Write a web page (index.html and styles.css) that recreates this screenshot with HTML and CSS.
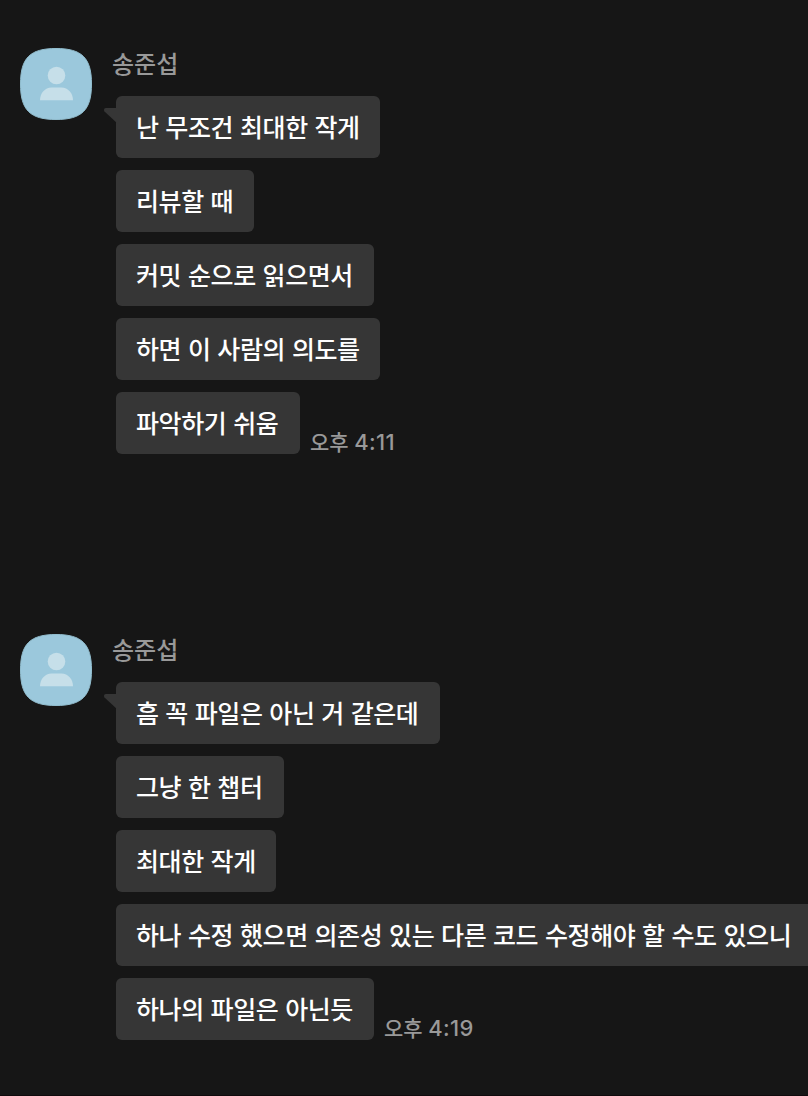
FILE: index.html
```html
<!DOCTYPE html>
<html lang="ko">
<head>
<meta charset="utf-8">
<title>채팅</title>
<link rel="stylesheet" href="styles.css">
</head>
<body>
<main class="chat">
  <section class="group">
    <svg class="avatar" viewBox="0 0 72 72"><path class="avatar-bg" d="M36 .5C62 .5 71.500 10 71.500 36S62 71.500 36 71.500S.5 62 .5 36S10 .5 36 .5Z"/><circle class="avatar-fg" cx="36.500" cy="27.500" r="8.800"/><path class="avatar-fg" d="M20 52.300C20 45 25 39.500 31.500 39.500H41.500C48 39.500 53 45 53 52.300Z"/></svg>
    <div class="content">
      <div class="name">송준섭</div>
      <div class="row"><svg class="tail" viewBox="0 0 14 16"><path d="M14 0H2C0 0-.5 2 .5 3.500L14 16Z"/></svg><div class="bubble w264">난 무조건 최대한 작게</div></div>
      <div class="row"><div class="bubble w138">리뷰할 때</div></div>
      <div class="row"><div class="bubble w258">커밋 순으로 읽으면서</div></div>
      <div class="row"><div class="bubble w264">하면 이 사람의 의도를</div></div>
      <div class="row"><div class="bubble w184">파악하기 쉬움</div><time class="time">오후 <span class="clock">4:11</span></time></div>
    </div>
  </section>
  <section class="group">
    <svg class="avatar" viewBox="0 0 72 72"><path class="avatar-bg" d="M36 .5C62 .5 71.500 10 71.500 36S62 71.500 36 71.500S.5 62 .5 36S10 .5 36 .5Z"/><circle class="avatar-fg" cx="36.500" cy="27.500" r="8.800"/><path class="avatar-fg" d="M20 52.300C20 45 25 39.500 31.500 39.500H41.500C48 39.500 53 45 53 52.300Z"/></svg>
    <div class="content">
      <div class="name">송준섭</div>
      <div class="row"><svg class="tail" viewBox="0 0 14 16"><path d="M14 0H2C0 0-.5 2 .5 3.500L14 16Z"/></svg><div class="bubble w324">흠 꼭 파일은 아닌 거 같은데</div></div>
      <div class="row"><div class="bubble w168">그냥 한 챕터</div></div>
      <div class="row"><div class="bubble w160">최대한 작게</div></div>
      <div class="row"><div class="bubble w700">하나 수정 했으면 의존성 있는 다른 코드 수정해야 할 수도 있으니</div></div>
      <div class="row"><div class="bubble w258">하나의 파일은 아닌듯</div><time class="time">오후 <span class="clock">4:19</span></time></div>
    </div>
  </section>
</main>
</body>
</html>
```
FILE: styles.css
```css
* { box-sizing: border-box; }
body {
  margin: 0;
  background: #161616;
  font-family: Inter, "Noto Sans CJK KR", sans-serif;
  overflow: hidden;
}
.chat {
  height: 1096px;
  padding: 48px 0 0 20px;
  border-bottom: 1px solid #100a0d;
  overflow: hidden;
}
.group { display: flex; gap: 20px; height: 586px; }
.avatar { width: 72px; height: 72px; flex: none; }
.avatar-bg { fill: #9bc8dc; stroke: #93bfd0; stroke-width: 1; }
.avatar-fg { fill: #c6dfe9; }
.content { display: flex; flex-direction: column; gap: 12px; }
.name {
  height: 36px;
  line-height: 34px;
  font-size: 24px;
  font-weight: 500;
  color: #999;
}
.row {
  position: relative;
  display: flex;
  align-items: flex-end;
  gap: 10px;
  padding-left: 4px;
}
.bubble {
  flex: none;
  height: 62px;
  padding: 1px 0 0 20px;
  border-radius: 6px;
  background: #363636;
  color: #fff;
  font-size: 25px;
  font-weight: 500;
  letter-spacing: -0.4px;
  word-spacing: 0.5px;
  line-height: 62px;
  white-space: nowrap;
}
.tail {
  position: absolute;
  left: -8px;
  top: 12px;
  width: 14px;
  height: 16px;
  fill: #363636;
}
.w138 { width: 138px; }
.w160 { width: 160px; }
.w168 { width: 168px; }
.w184 { width: 184px; }
.w258 { width: 258px; }
.w264 { width: 264px; }
.w324 { width: 324px; }
.w700 { width: 700px; }
.time {
  color: #999;
  font-size: 21px;
  font-weight: 500;
  line-height: 22px;
  white-space: nowrap;
}
.clock { font-size: 22px; letter-spacing: 0.3px; }
```
